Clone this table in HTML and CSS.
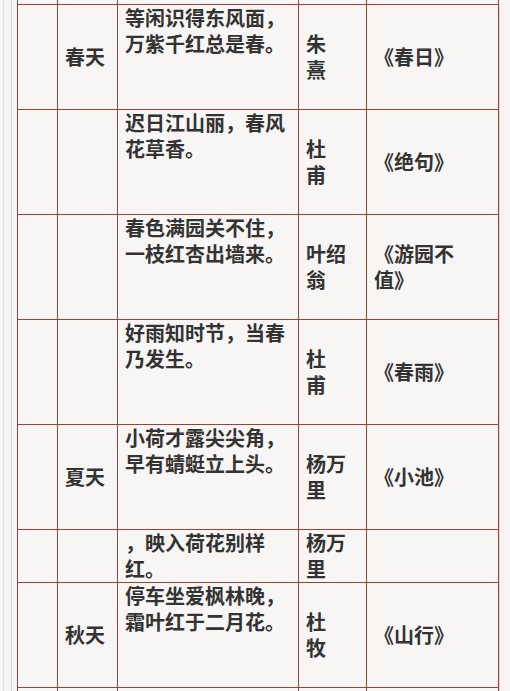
FILE: index.html
```html
<!DOCTYPE html>
<html lang="zh">
<head>
<meta charset="utf-8">
<title>诗词表</title>
<link rel="stylesheet" href="styles.css">
</head>
<body>
<div class="frame">
  <div class="inner">
    <table class="poems">
      <colgroup>
        <col class="c1"><col class="c2"><col class="c3"><col class="c4"><col class="c5">
      </colgroup>
      <tbody>
        <tr class="stub"><td></td><td></td><td></td><td></td><td></td></tr>
        <tr class="row">
          <td></td><td class="mid">春天</td>
          <td class="poem">等闲识得东风面，万紫千红总是春。</td>
          <td class="mid">朱　熹</td><td class="mid title">《春日》</td>
        </tr>
        <tr class="row">
          <td></td><td class="mid"></td>
          <td class="poem">迟日江山丽，春风花草香。</td>
          <td class="mid">杜　甫</td><td class="mid title">《绝句》</td>
        </tr>
        <tr class="row">
          <td></td><td class="mid"></td>
          <td class="poem">春色满园关不住，一枝红杏出墙来。</td>
          <td class="mid">叶绍翁</td><td class="mid title">《游园不值》</td>
        </tr>
        <tr class="row">
          <td></td><td class="mid"></td>
          <td class="poem">好雨知时节，当春乃发生。</td>
          <td class="mid">杜　甫</td><td class="mid title">《春雨》</td>
        </tr>
        <tr class="row">
          <td></td><td class="mid">夏天</td>
          <td class="poem">小荷才露尖尖角，早有蜻蜓立上头。</td>
          <td class="mid">杨万里</td><td class="mid title">《小池》</td>
        </tr>
        <tr class="short">
          <td></td><td class="mid"></td>
          <td class="poem">，映入荷花别样红。</td>
          <td class="mid">杨万里</td><td class="mid title"></td>
        </tr>
        <tr class="row">
          <td></td><td class="mid">秋天</td>
          <td class="poem">停车坐爱枫林晚，霜叶红于二月花。</td>
          <td class="mid">杜　牧</td><td class="mid title">《山行》</td>
        </tr>
        <tr class="row">
          <td></td><td></td><td></td><td></td><td></td>
        </tr>
      </tbody>
    </table>
  </div>
</div>
</body>
</html>
```

FILE: styles.css
```css
html, body {
  margin: 0;
  padding: 0;
  background: #f6f4f2;
  height: 691px;
  overflow: hidden;
}

.frame {
  margin-left: 3px;
  border-left: 1px solid #e4dede;
  padding-left: 7px;
  width: 500px;
  height: 691px;
}

.inner {
  border-left: 1px solid #d9d2d2;
  padding-left: 5px;
  height: 691px;
}

.poems {
  border-collapse: collapse;
  table-layout: fixed;
  width: 482px;
  background: #f8f6f4;
  font-family: "Noto Sans CJK SC", "Microsoft YaHei", sans-serif;
  font-size: 20px;
  font-weight: bold;
  line-height: 26px;
  color: #333;
  box-shadow: 6px 0 0 -5px #ead6d3;
}

.c1 { width: 40px; }
.c2 { width: 60px; }
.c3 { width: 181px; }
.c4 { width: 68px; }
.c5 { width: 132px; }

.poems td {
  border: 1px solid #9c4336;
  padding: 0 7px;
  vertical-align: middle;
  text-align: left;
}

.poems td.title {
  padding-right: 16px;
}

.poems tr.stub td {
  border-top: none;
  height: 4px;
  padding: 0;
}

.poems tr.row td {
  height: 104px;
}

.poems td.poem {
  vertical-align: top;
}
```
